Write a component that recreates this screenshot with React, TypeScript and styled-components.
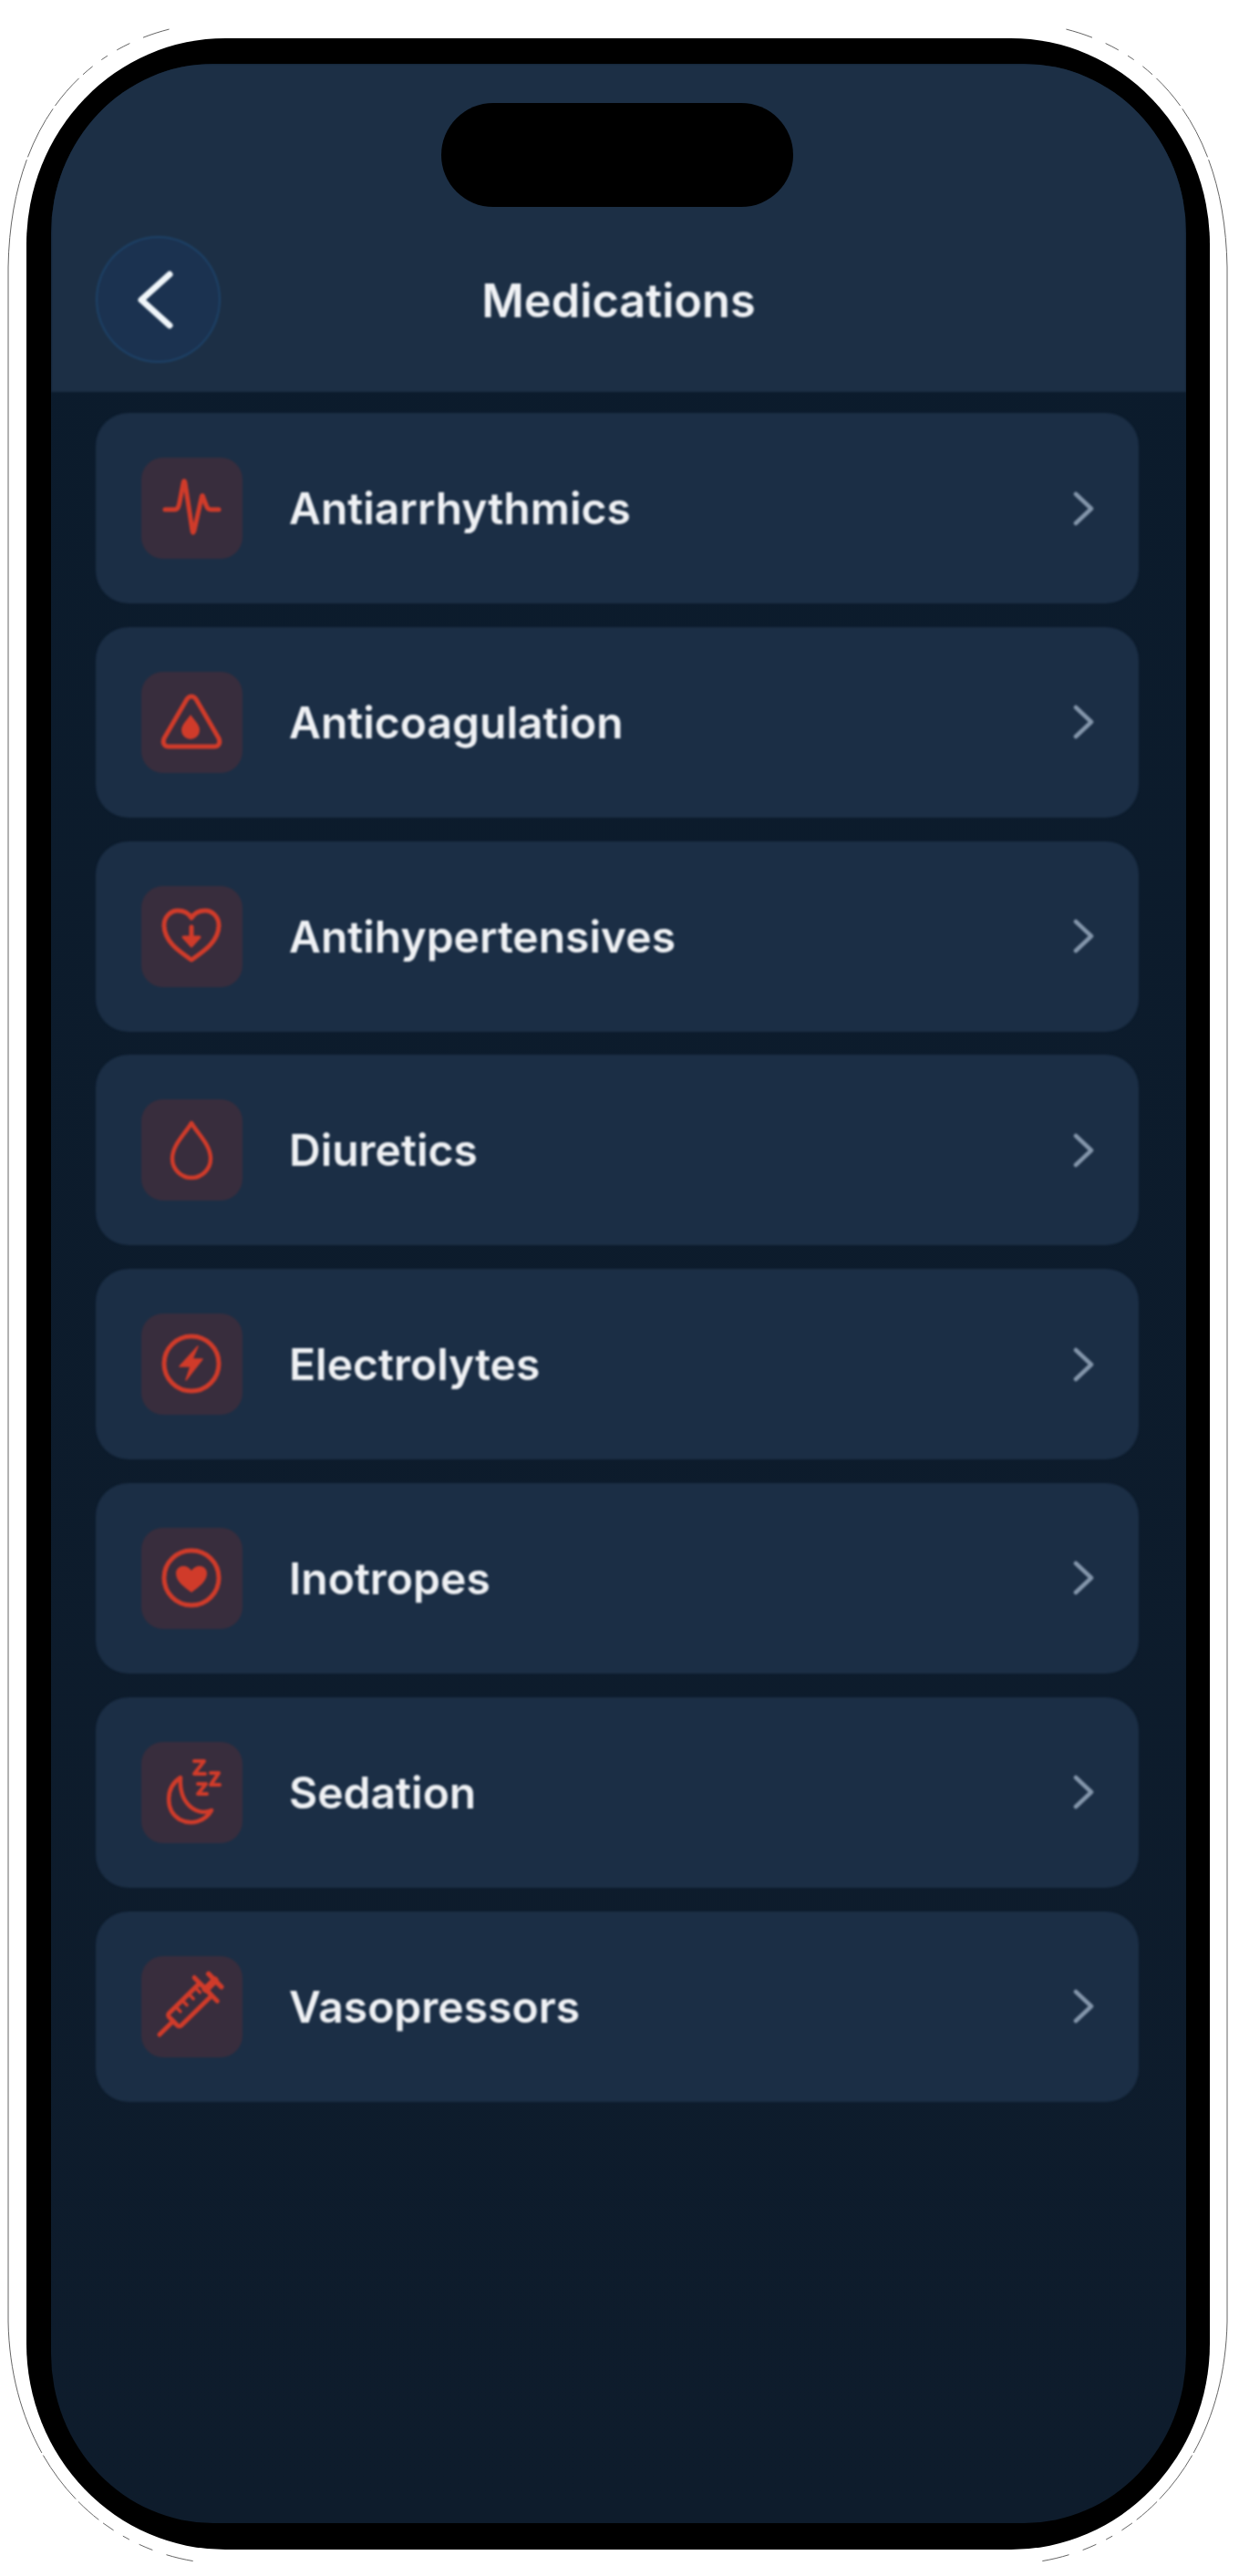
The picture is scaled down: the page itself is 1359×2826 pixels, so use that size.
import React from "react";
import styled, { createGlobalStyle } from "styled-components";

const Global = createGlobalStyle`
  html, body { margin: 0; padding: 0; background: #fff; }
  #root { width: 1359px; }
`;

const Page = styled.div`
  position: relative;
  width: 1359px;
  height: 2826px;
  box-sizing: border-box;
  padding: 42px 32px 29px 29px;
  background: #fff;
  font-family: Inter, "Liberation Sans", sans-serif;
`;

const Outline = styled.svg`
  position: absolute;
  inset: 0;
  pointer-events: none;
`;

const Frame = styled.div`
  height: 100%;
  box-sizing: border-box;
  padding: 28px 26px 29px 27px;
  background: #000;
  border-radius: 218px / 226px;
`;

const Screen = styled.div`
  position: relative;
  height: 100%;
  display: flex;
  flex-direction: column;
  overflow: hidden;
  border-radius: 178px / 186px;
  background: linear-gradient(180deg, #0b1b2c 0%, #0e1c2c 100%);
`;

const Island = styled.div`
  position: absolute;
  top: 43px;
  left: 428px;
  width: 386px;
  height: 114px;
  border-radius: 57px;
  background: #000;
  z-index: 2;
`;

const Blur = styled.div`
  display: flex;
  flex-direction: column;
  flex: 1;
  filter: blur(0.8px);
`;

const Header = styled.header`
  height: 360px;
  box-sizing: border-box;
  padding: 189px 49px 0;
  display: grid;
  grid-template-columns: 1fr auto 1fr;
  align-items: start;
  background: #1c2f45;
`;

const BackButton = styled.button`
  width: 137px;
  height: 139px;
  padding: 0;
  border: 2px solid #1d4268;
  border-radius: 50%;
  background: #1b3250;
  display: flex;
  align-items: center;
  justify-content: center;
`;

const Title = styled.h1`
  margin: 41px 0 0;
  font-size: 50.500px;
  line-height: 60px;
  font-weight: 600;
  color: #f0f2f5;
  text-align: center;
`;

const List = styled.ul`
  list-style: none;
  margin: 0;
  padding: 23px 52px 0 49px;
  display: flex;
  flex-direction: column;
  gap: 25.8px;
`;

const Row = styled.li`
  height: 209px;
  box-sizing: border-box;
  padding: 0 48px 0 50px;
  display: flex;
  align-items: center;
  border-radius: 36px;
  background: #1b2e45;
`;

const IconBox = styled.div`
  width: 111px;
  height: 111px;
  flex: none;
  border-radius: 24px;
  background: #382d3d;
`;

const Label = styled.span`
  flex: 1;
  margin-left: 51px;
  font-size: 48px;
  font-weight: 600;
  color: #eff1f4;
`;

const Chevron = styled.svg`
  flex: none;
  width: 24px;
  height: 38px;
`;

const RED = "#d03b2a";

const Glyph: React.FC<{ children: React.ReactNode }> = ({ children }) => (
  <svg
    width="111"
    height="111"
    viewBox="0 0 111 111"
    fill="none"
    stroke={RED}
    strokeWidth="4.500"
    strokeLinecap="round"
    strokeLinejoin="round"
  >
    {children}
  </svg>
);

const icons: Record<string, React.ReactNode> = {
  Antiarrhythmics: (
    <Glyph>
      <path d="M26 57h11c3 0 4-3 5-8l4-21c.5-3 1.500-3 2 0l8 52c.5 3 1 3 2 0l8-36c.5-3 1.500-3 2 0l3 8c1 3 2 5 5 5h9" strokeWidth="5" />
    </Glyph>
  ),
  Anticoagulation: (
    <Glyph>
      <path d="M50 30c3-4 7-4 10 0l25 43c2 5 0 9-5 9H30c-5 0-7-4-5-9z" strokeWidth="5" />
      <path
        d="M54 47c-4 6-10 11-10 17a10 10 0 0 0 20 0c0-6-6-11-10-17z"
        fill={RED}
        stroke="none"
      />
    </Glyph>
  ),
  Antihypertensives: (
    <Glyph>
      <path d="M55 81C42 72 25 61 25 43c0-9 7-16 15-16 6 0 12 3 15 8 3-5 9-8 15-8 8 0 15 7 15 16 0 18-17 29-30 38z" strokeWidth="5" />
      <path d="M55 45v17" strokeWidth="5" />
      <path d="M46 56h18l-9 10z" fill={RED} strokeWidth="3" />
    </Glyph>
  ),
  Diuretics: (
    <Glyph>
      <path d="M55 26C48 38 34 50 34 65a21 21 0 0 0 42 0C76 50 62 38 55 26z" />
    </Glyph>
  ),
  Electrolytes: (
    <Glyph>
      <circle cx="55" cy="55" r="30" strokeWidth="5" />
      <path d="M62 36 42 58h12l-5 15 18-23H56z" fill={RED} stroke={RED} strokeWidth="1.500" />
    </Glyph>
  ),
  Inotropes: (
    <Glyph>
      <circle cx="55" cy="55" r="30" strokeWidth="5" />
      <path
        d="M55 71C47 65 38 59 38 50c0-5 4-8 8-8 4 0 7 2 9 5 2-3 5-5 9-5 4 0 8 3 8 8 0 9-9 15-17 21z"
        fill={RED}
        stroke="none"
      />
    </Glyph>
  ),
  Sedation: (
    <Glyph>
      <path d="M43 39C26 50 26 75 42 85c13 7 28 2 35-10-17 7-36-8-34-36z" strokeWidth="4.500" />
      <path d="M58 21h11L58 35h12M76 34h9L76 47h10M62 46h9L62 57h10" strokeWidth="4" />
    </Glyph>
  ),
  Vasopressors: (
    <Glyph>
      <g transform="translate(20 86) rotate(-44.400)">
        <path d="M0 0h21" strokeWidth="5" />
        <rect x="21" y="-9.500" width="50" height="19" rx="3" strokeWidth="5" />
        <path d="M34-9v7M44-9v7M54-9v7M64-9v7" strokeWidth="3.500" />
        <path d="M71-18v36" strokeWidth="5" />
        <path d="M71 0h14" strokeWidth="8" />
        <path d="M85-10v20" strokeWidth="5.500" />
      </g>
    </Glyph>
  ),
};

const items = Object.keys(icons);

export default function App() {
  return (
    <Page>
      <Global />
      <Frame>
        <Screen>
          <Island />
          <Blur>
            <Header>
              <BackButton aria-label="Back">
                <svg width="48" height="68" viewBox="0 0 48 68" fill="none">
                  <path d="M36 6 5 34l31 28" stroke="#f0f6fa" strokeWidth="7" strokeLinecap="round" strokeLinejoin="round" />
                </svg>
              </BackButton>
              <Title>Medications</Title>
            </Header>
            <List>
              {items.map((name) => (
                <Row key={name}>
                  <IconBox>{icons[name]}</IconBox>
                  <Label>{name}</Label>
                  <Chevron viewBox="0 0 24 38" fill="none">
                    <path d="M3 3l17 16L3 35" stroke="#8496ab" strokeWidth="4.500" strokeLinecap="round" strokeLinejoin="round" />
                  </Chevron>
                </Row>
              ))}
            </List>
          </Blur>
        </Screen>
      </Frame>
      <Outline width="1359" height="2826" viewBox="0 0 1359 2826" fill="none" stroke="#666" strokeWidth="1">
        <path d="M9 293V2547M1346 293V2547" />
        <path d="M9 293C12 120 110 28 245 24" strokeDasharray="120 3 60 4 40 6 14 12 8 12 16 16 30" />
        <path d="M1346 293C1343 120 1245 28 1110 24" strokeDasharray="120 3 60 4 40 6 14 12 8 12 16 16 30" />
        <path d="M9 2547C12 2700 110 2808 245 2813" strokeDasharray="150 3 60 4 30 6 14 12 8 12 16 16 30" />
        <path d="M1346 2547C1343 2700 1245 2808 1110 2813" strokeDasharray="150 3 60 4 30 6 14 12 8 12 16 16 30" />
      </Outline>
    </Page>
  );
}
